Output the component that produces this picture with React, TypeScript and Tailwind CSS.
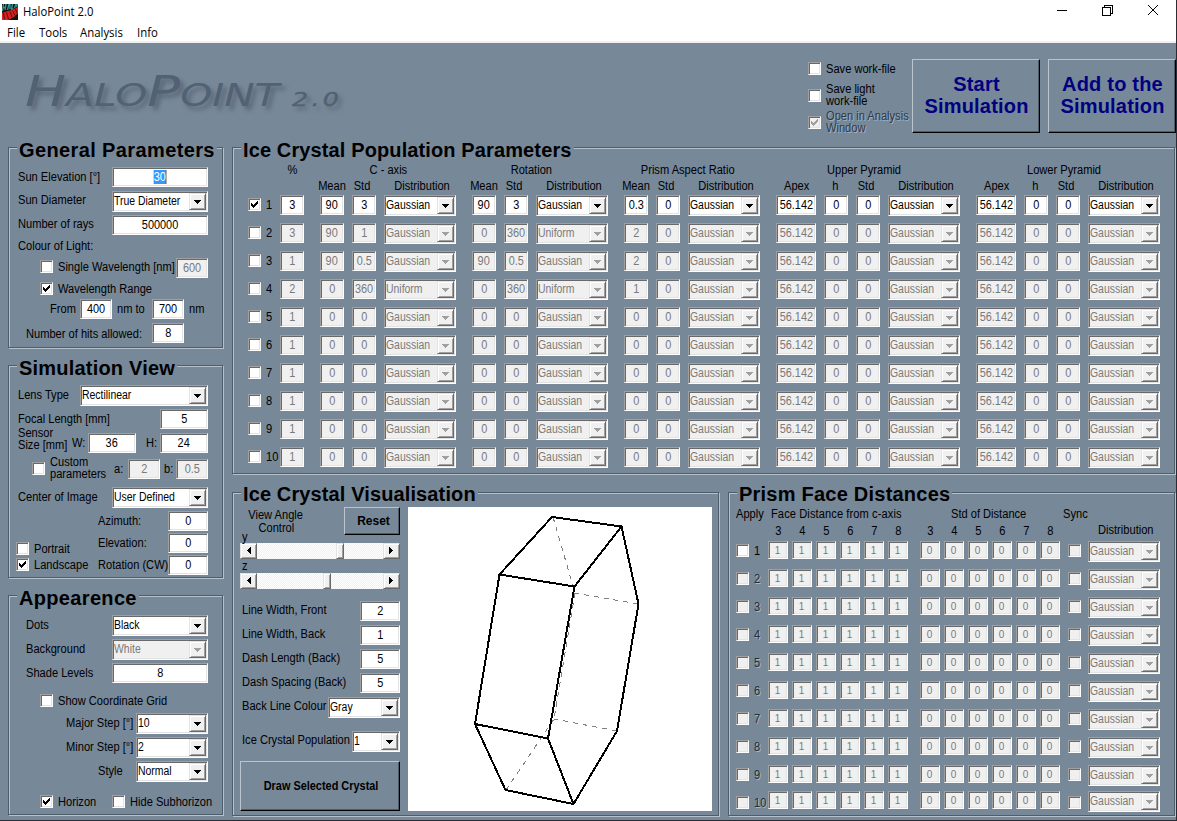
import React from "react";

const SUNKEN =
  "border border-t-[#a0a0a0] border-l-[#a0a0a0] border-r-white border-b-white shadow-[inset_1px_1px_0_#696969,inset_-1px_-1px_0_#e3e3e3]";
const RAISED =
  "border border-t-[#e3e3e3] border-l-[#e3e3e3] border-r-[#696969] border-b-[#696969] shadow-[inset_1px_1px_0_#fff,inset_-1px_-1px_0_#a0a0a0]";

type Kids = { children?: React.ReactNode; className?: string };

function Label({ children, className = "" }: Kids) {
  return (
    <div className={`flex shrink-0 items-center whitespace-nowrap ${className}`}>
      <span className="block origin-left scale-x-[0.925]">{children}</span>
    </div>
  );
}

function Head({ children, className = "" }: Kids) {
  return (
    <div className={`flex shrink-0 items-center justify-center whitespace-nowrap ${className}`}>
      <span className="block scale-x-[0.925]">{children}</span>
    </div>
  );
}

function Field({ v, className = "w-[24px]", off = false }: { v: React.ReactNode; className?: string; off?: boolean }) {
  return (
    <div
      className={`flex h-[20px] shrink-0 items-center justify-center whitespace-nowrap pb-px ${SUNKEN} ${
        off ? "bg-[#f0f0f0] text-[#7a7a7a]" : "bg-white text-black"
      } ${className}`}
    >
      <span className="block scale-x-[0.91]">{v}</span>
    </div>
  );
}

function Select({
  v,
  className = "mt-px w-[72px]",
  off = false,
}: {
  v: string;
  className?: string;
  off?: boolean;
}) {
  return (
    <div
      className={`flex h-[21px] shrink-0 items-center justify-between whitespace-nowrap p-px ${SUNKEN} ${
        off ? "bg-[#f0f0f0] text-[#7a7a7a]" : "bg-white text-black"
      } ${className}`}
    >
      <span className="block w-0 origin-left scale-x-[0.87] pb-px">{v}</span>
      <span className={`flex h-[17px] w-[17px] shrink-0 items-center justify-center bg-[#f0f0f0] ${RAISED}`}>
        <svg width="7" height="4" viewBox="0 0 7 4" className="mt-px" shapeRendering="crispEdges">
          <path d="M0 0h7v1h-1v1h-1v1h-1v1h-1v-1h-1v-1h-1v-1h-1z" fill={off ? "#a0a0a0" : "#000"} />
        </svg>
      </span>
    </div>
  );
}

function Check({ on = false, off = false, className = "" }: { on?: boolean; off?: boolean; className?: string }) {
  return (
    <div
      className={`flex h-[13px] w-[13px] shrink-0 items-center justify-center ${SUNKEN} ${
        off ? "bg-[#f0f0f0]" : "bg-white"
      } ${className}`}
    >
      {on && (
        <svg width="7" height="7" viewBox="0 0 7 7" shapeRendering="crispEdges">
          <path
            d="M0 2h1v1h1v1h1v-1h1v-1h1v-1h1v-1h1v3h-1v1h-1v1h-1v1h-1v1h-1v-1h-1v-1h-1z"
            fill={off ? "#a0a0a0" : "#000"}
          />
        </svg>
      )}
    </div>
  );
}

function Group({ title, children, className = "", heading }: Kids & { title: string; heading: string }) {
  return (
    <section
      className={`shrink-0 border border-[#4f5d6b] shadow-[inset_1px_1px_0_#b7c1cb,1px_1px_0_#b7c1cb] ${className}`}
    >
      <h2
        className={`-mt-[10px] ml-[8px] flex h-[24px] w-fit items-center whitespace-nowrap bg-[#778899] px-[2px] text-[20px] font-bold ${heading}`}
      >
        {title}
      </h2>
      {children}
    </section>
  );
}

function Row({ children, className = "h-[24px]" }: Kids) {
  return <div className={`flex items-center ${className}`}>{children}</div>;
}

function GeneralParameters() {
  return (
    <Group title="General Parameters" heading="tracking-[0.38px]" className="h-[201px] w-[215px]">
      <div className="-ml-px mt-[3px] flex flex-col">
        <Row>
          <Label className="ml-[10px] w-[94px]">Sun Elevation [°]</Label>
          <Field v={<span className="border-r border-[#c06000] bg-[#3399ff] text-white">30</span>} className="w-[96px]" />
        </Row>
        <Row>
          <Label className="ml-[10px] w-[94px] pb-[2px]">Sun Diameter</Label>
          <Select v="True Diameter" className="mt-px w-[96px]" />
        </Row>
        <Row>
          <Label className="ml-[10px] w-[94px] pb-[2px]">Number of rays</Label>
          <Field v="500000" className="w-[96px]" />
        </Row>
        <Row className="h-[18px]">
          <Label className="ml-[10px] pb-px">Colour of Light:</Label>
        </Row>
        <Row className="h-[26px]">
          <Check className="mb-[3px] ml-[32px]" />
          <Label className="ml-[5px] w-[118px] pb-[2px]">Single Wavelength [nm]</Label>
          <Field v="600" className="w-[32px]" off />
        </Row>
        <Row className="h-[17px]">
          <Check on className="mb-[2px] ml-[32px]" />
          <Label className="ml-[5px] pb-px">Wavelength Range</Label>
        </Row>
        <Row className="h-[22px]">
          <Label className="ml-[42px] w-[30px] pb-px">From</Label>
          <Field v="400" className="w-[32px]" />
          <Label className="ml-[5px] w-[35px] pb-px">nm to</Label>
          <Field v="700" className="w-[32px]" />
          <Label className="ml-[5px] pb-px">nm</Label>
        </Row>
        <Row className="h-[26px]">
          <Label className="ml-[18px] w-[126px] pt-[2px]">Number of hits allowed:</Label>
          <Field v="8" className="w-[32px]" />
        </Row>
      </div>
    </Group>
  );
}

function SimulationView() {
  return (
    <Group title="Simulation View" heading="tracking-[0.2px]" className="mt-[17px] h-[213px] w-[215px]">
      <div className="-ml-px mt-[3px] flex flex-col">
        <Row>
          <Label className="ml-[10px] w-[62px]">Lens Type</Label>
          <Select v="Rectilinear" className="mt-px w-[128px]" />
        </Row>
        <Row>
          <Label className="ml-[10px] w-[142px]">Focal Length [mm]</Label>
          <Field v="5" className="w-[48px]" />
        </Row>
        <Row>
          <Label className="ml-[10px] w-[54px] pb-[8px] leading-[12px]">
            Sensor
            <br />
            Size [mm]
          </Label>
          <Label className="w-[16px]">W:</Label>
          <Field v="36" className="w-[48px]" />
          <Label className="ml-[10px] w-[14px]">H:</Label>
          <Field v="24" className="w-[48px]" />
        </Row>
        <Row className="h-[28px]">
          <Check className="mb-px ml-[24px]" />
          <Label className="ml-[5px] w-[64px] pb-[2px] leading-[12px]">
            Custom
            <br />
            parameters
          </Label>
          <Label className="w-[14px]">a:</Label>
          <Field v="2" className="w-[32px]" off />
          <Label className="ml-[4px] w-[12px]">b:</Label>
          <Field v="0.5" className="w-[32px]" off />
        </Row>
        <Row className="h-[28px]">
          <Label className="ml-[10px] w-[94px]">Center of Image</Label>
          <Select v="User Defined" className="mt-px w-[96px]" />
        </Row>
        <div className="-mt-px flex">
          <div className="flex w-[90px] flex-col pt-[30px]">
            <Row className="h-[17px]">
              <Check className="ml-[8px]" />
              <Label className="ml-[5px] pt-px">Portrait</Label>
            </Row>
            <Row className="h-[16px]">
              <Check on className="mb-px ml-[8px]" />
              <Label className="ml-[5px]">Landscape</Label>
            </Row>
          </div>
          <div className="flex flex-col">
            {["Azimuth:", "Elevation:", "Rotation (CW)"].map((t) => (
              <Row key={t} className="h-[22px]">
                <Label className="w-[70px] pb-px">{t}</Label>
                <Field v="0" className="w-[40px]" />
              </Row>
            ))}
          </div>
        </div>
      </div>
    </Group>
  );
}

function Appearance() {
  const steps: [string, string, string][] = [
    ["Major Step [°]", "10", "ml-[58px] w-[70px]"],
    ["Minor Step [°]", "2", "ml-[58px] w-[70px]"],
    ["Style", "Normal", "ml-[90px] w-[38px]"],
  ];
  return (
    <Group title="Appearence" heading="tracking-[0.33px]" className="mt-[17px] h-[220px] w-[215px]">
      <div className="-ml-px mt-[3px] flex flex-col">
        <Row>
          <Label className="ml-[18px] w-[86px]">Dots</Label>
          <Select v="Black" className="mt-px w-[96px]" />
        </Row>
        <Row>
          <Label className="ml-[18px] w-[86px]">Background</Label>
          <Select v="White" className="mt-px w-[96px]" off />
        </Row>
        <Row>
          <Label className="ml-[18px] w-[86px]">Shade Levels</Label>
          <Field v="8" className="w-[96px]" />
        </Row>
        <Row className="h-[30px]">
          <Check className="mt-px ml-[32px]" />
          <Label className="ml-[5px] pt-px">Show Coordinate Grid</Label>
        </Row>
        <div className="-mt-[4px] flex flex-col">
          {steps.map(([t, v, c]) => (
            <Row key={t}>
              <Label className={c}>{t}</Label>
              <Select v={v} />
            </Row>
          ))}
        </div>
        <Row className="mt-[5px] h-[26px]">
          <Check on className="mt-px ml-[32px]" />
          <Label className="ml-[5px] w-[54px] pt-px">Horizon</Label>
          <Check className="mt-px" />
          <Label className="ml-[5px] pt-px">Hide Subhorizon</Label>
        </Row>
      </div>
    </Group>
  );
}

const G = "Gaussian";
const U = "Uniform";
const POP: [string, string, string, string, string, string, string, string][] = [
  ["3", "90", "3", G, "90", "3", G, "0.3"],
  ["3", "90", "1", G, "0", "360", U, "2"],
  ["1", "90", "0.5", G, "90", "0.5", G, "2"],
  ["2", "0", "360", U, "0", "360", U, "1"],
  ["1", "0", "0", G, "0", "0", G, "0"],
  ["1", "0", "0", G, "0", "0", G, "0"],
  ["1", "0", "0", G, "0", "0", G, "0"],
  ["1", "0", "0", G, "0", "0", G, "0"],
  ["1", "0", "0", G, "0", "0", G, "0"],
  ["1", "0", "0", G, "0", "0", G, "0"],
];

function MeanHeads() {
  return (
    <>
      <Head className="w-[24px]">Mean</Head>
      <Head className="w-[24px] pr-[4px]">Std</Head>
      <Head className="w-[72px] pl-[5px]">Distribution</Head>
    </>
  );
}

function PyramidHeads() {
  return (
    <>
      <Head className="w-[40px] pl-px">Apex</Head>
      <Head className="w-[24px] pr-[2px]">h</Head>
      <Head className="w-[24px] pr-[4px]">Std</Head>
      <Head className="w-[72px] pl-[5px]">Distribution</Head>
    </>
  );
}

function Population() {
  return (
    <Group title="Ice Crystal Population Parameters" heading="tracking-[0.12px]" className="h-[327px] w-[943px]">
      <div className="-ml-px flex flex-col">
        <Row className="h-[16px]">
          <Head className="ml-[48px] w-[24px]">%</Head>
          <Head className="ml-[16px] w-[136px]">C - axis</Head>
          <Head className="ml-[16px] w-[136px] pr-[17px]">Rotation</Head>
          <Head className="ml-[16px] w-[136px] pr-[9px]">Prism Aspect Ratio</Head>
          <Head className="ml-[16px] w-[184px] pr-[8px]">Upper Pyramid</Head>
          <Head className="ml-[16px] w-[184px] pr-[8px]">Lower Pyramid</Head>
        </Row>
        <Row className="h-[16px]">
          <div className="ml-[88px] flex gap-[8px]">
            <MeanHeads />
          </div>
          <div className="ml-[16px] flex gap-[8px]">
            <MeanHeads />
          </div>
          <div className="ml-[16px] flex gap-[8px]">
            <MeanHeads />
          </div>
          <div className="ml-[16px] flex gap-[8px]">
            <PyramidHeads />
          </div>
          <div className="ml-[16px] flex gap-[8px]">
            <PyramidHeads />
          </div>
        </Row>
        <div className="-mt-[3px] flex flex-col">
          {POP.map((r, i) => {
            const off = i > 0;
            return (
              <Row key={i} className="h-[28px]">
                <Check on={!off} className="mb-px ml-[16px]" />
                <Label className="ml-[5px] w-[14px]">{i + 1}</Label>
                <Field v={r[0]} off={off} />
                <div className="ml-[16px] flex items-center gap-[8px]">
                  <Field v={r[1]} off={off} />
                  <Field v={r[2]} off={off} />
                  <Select v={r[3]} off={off} />
                </div>
                <div className="ml-[16px] flex items-center gap-[8px]">
                  <Field v={r[4]} off={off} />
                  <Field v={r[5]} off={off} />
                  <Select v={r[6]} off={off} />
                </div>
                <div className="ml-[16px] flex items-center gap-[8px]">
                  <Field v={r[7]} off={off} />
                  <Field v="0" off={off} />
                  <Select v={G} off={off} />
                </div>
                {[0, 1].map((k) => (
                  <div key={k} className="ml-[16px] flex items-center gap-[8px]">
                    <Field v="56.142" off={off} className="w-[40px]" />
                    <Field v="0" off={off} />
                    <Field v="0" off={off} />
                    <Select v={G} off={off} />
                  </div>
                ))}
              </Row>
            );
          })}
        </div>
      </div>
    </Group>
  );
}

const DITHER =
  "bg-[repeating-conic-gradient(#ffffff_0_25%,#f0f0f0_0_50%)] bg-[length:2px_2px]";

function ScrollBar({ lead }: { lead: string }) {
  return (
    <div className={`flex h-[16px] w-[160px] shrink-0 ${DITHER}`}>
      <span className={`flex w-[17px] items-center justify-center bg-[#f0f0f0] pb-px ${RAISED}`}>
        <svg width="4" height="7" viewBox="0 0 4 7" shapeRendering="crispEdges">
          <path d="M4 0v7h-1v-1h-1v-1h-1v-1h-1v-1h1v-1h1v-1h1v-1z" />
        </svg>
      </span>
      <span className={lead} />
      <span className={`w-[8px] bg-[#f0f0f0] ${RAISED}`} />
      <span className="grow" />
      <span className={`flex w-[17px] items-center justify-center bg-[#f0f0f0] pr-px pb-px ${RAISED}`}>
        <svg width="4" height="7" viewBox="0 0 4 7" shapeRendering="crispEdges">
          <path d="M0 0v7h1v-1h1v-1h1v-1h1v-1h-1v-1h-1v-1h-1v-1z" />
        </svg>
      </span>
    </div>
  );
}

const BUTTON =
  "flex shrink-0 items-center justify-center border border-t-[#bcc5ce] border-l-[#bcc5ce] border-r-black border-b-black bg-[#778899] text-center font-bold shadow-[inset_-1px_-1px_0_#4f5b67]";

function Crystal() {
  return (
    <svg width="304" height="304" viewBox="408 507 304 304" className="bg-white" fill="none">
      <g stroke="#808080" strokeWidth="1" strokeDasharray="5 5" shapeRendering="crispEdges">
        <path d="M553 517L575 593M638 604L575 593M575 593L554 719M617 731L554 719M506 790L554 719" />
      </g>
      <g stroke="#000" strokeWidth="2" strokeLinejoin="round" shapeRendering="crispEdges">
        <path d="M552 517L621.500 526.500L574.500 586.500L499.500 574.500Z" />
        <path d="M499.500 574.500L475 724L548 738.500L574.500 586.500" />
        <path d="M621.500 526.500L638.500 604L617 731L573.500 804L548 738.500" />
        <path d="M475 724L505.500 790L573.500 804" />
      </g>
    </svg>
  );
}

function Visualisation() {
  const widths: [string, string][] = [
    ["Line Width, Front", "2"],
    ["Line Width, Back", "1"],
    ["Dash Length (Back)", "5"],
    ["Dash Spacing (Back)", "5"],
  ];
  return (
    <Group
      title="Ice Crystal Visualisation"
      heading="pb-[2px] tracking-[0.12px]"
      className="h-[324px] w-[487px]"
    >
      <div className="flex pl-[7px]">
        <div className="flex w-[160px] flex-col">
          <div className="flex h-[28px]">
            <div className="flex w-[104px] flex-col items-center pt-[2px] pr-[32px] leading-[13px]">
              <Head className="h-[13px]">View Angle</Head>
              <Head className="h-[13px]">Control</Head>
            </div>
            <button className={`h-[28px] w-[56px] pl-[3px] ${BUTTON}`}>Reset</button>
          </div>
          <Label className="-mt-[2px] ml-[2px] h-[10px] pb-[2px]">y</Label>
          <ScrollBar lead="w-[79px]" />
          <Label className="ml-[2px] h-[14px]">z</Label>
          <ScrollBar lead="w-[66px]" />
          <div className="mt-[10px] flex flex-col">
            {widths.map(([t, v]) => (
              <Row key={t}>
                <Label className="ml-[2px] w-[118px] pb-[2px]">{t}</Label>
                <Field v={v} className="w-[40px]" />
              </Row>
            ))}
            <Row>
              <Label className="ml-[2px] w-[86px] pb-[2px]">Back Line Colour</Label>
              <Select v="Gray" />
            </Row>
          </div>
          <Row className="mt-[10px] h-[24px]">
            <Label className="ml-[2px] w-[110px] pb-[2px]">Ice Crystal Population</Label>
            <Select v="1" className="mt-px w-[48px]" />
          </Row>
          <button className={`mt-[8px] h-[50px] w-[160px] pl-[2px] ${BUTTON}`}>
            <span className="block whitespace-nowrap scale-x-[0.91]">Draw Selected Crystal</span>
          </button>
        </div>
        <div className="ml-[8px]">
          <Crystal />
        </div>
      </div>
    </Group>
  );
}

const FACES = ["3", "4", "5", "6", "7", "8"];
const FACE_ROWS = Array.from({ length: 10 }, (_, i) => i + 1);

function FaceFields({ v }: { v: string }) {
  return (
    <div className="flex gap-[4px]">
      {FACES.map((f) => (
        <div
          key={f}
          className={`flex h-[18px] w-[20px] items-center justify-center bg-[#f0f0f0] pt-px pr-px text-[10px] text-[#7a7a7a] ${SUNKEN}`}
        >
          {v}
        </div>
      ))}
    </div>
  );
}

function FaceHeads({ className = "" }: { className?: string }) {
  return (
    <div className={`flex gap-[4px] pb-[2px] ${className}`}>
      {FACES.map((f) => (
        <Head key={f} className="w-[20px] pl-px">
          {f}
        </Head>
      ))}
    </div>
  );
}

function PrismFaces() {
  return (
    <Group title="Prism Face Distances" heading="pb-[2px] tracking-[0.23px]" className="h-[324px] w-[447px]">
      <div className="-ml-px flex flex-col">
        <Row className="h-[16px]">
          <Label className="ml-[8px] w-[35px] pb-[2px]">Apply</Label>
          <Label className="w-[180px] pb-[2px] tracking-[0.1px]">Face Distance from c-axis</Label>
          <Label className="w-[112px] pb-[2px]">Std of Distance</Label>
          <Label className="pb-[2px]">Sync</Label>
        </Row>
        <Row className="h-[18px]">
          <FaceHeads className="ml-[40px]" />
          <FaceHeads className="ml-[12px]" />
          <Label className="ml-[38px] pb-[4px]">Distribution</Label>
        </Row>
        <div className="-mt-[5px] flex flex-col">
          {FACE_ROWS.map((n) => {
            const last = n === 10;
            return (
              <Row key={n} className={last ? "h-[24px]" : "h-[28px]"}>
                <Check className={last ? "mt-[5px] ml-[8px]" : "mt-px ml-[8px]"} off={n > 1} />
                <Label
                  className={`ml-[5px] w-[14px] ${last ? "pt-[5px]" : "pt-px"} ${
                    n > 1 ? "text-[#252d35] [text-shadow:1px_1px_0_#a9b6c4]" : ""
                  }`}
                >
                  {n}
                </Label>
                <FaceFields v="1" />
                <div className="ml-[12px]">
                  <FaceFields v="0" />
                </div>
                <Check className={last ? "mt-[5px] ml-[8px]" : "mt-px ml-[8px]"} off />
                <Select v={G} off className="mt-[3px] ml-[7px] w-[72px]" />
              </Row>
            );
          })}
        </div>
      </div>
    </Group>
  );
}

function AppIcon() {
  return (
    <svg width="16" height="16" viewBox="0 0 16 16" className="mt-px ml-[2px]">
      <rect width="16" height="16" fill="#141414" />
      <path
        d="M1.500 0L.5 7M4 0L3 6M1 3.500h2.500M7 0L5.500 6M8 0v5M10.500 0L9.500 5h2M14 0l-1.500 4M15.500 0L14.500 3"
        stroke="#2f9a9a"
        strokeWidth="1.300"
        fill="none"
      />
      <path d="M0 9l4-1.500L10 6l6-3v6l-4 4-6 3H0z" fill="#dc1e1e" />
      <path d="M1.500 9l1 6M4.500 8.500l2 6.500M8 7.500l2 5.500M10.500 6.500l2.500 5M13.500 5l1.500 4" stroke="#5a0c0c" strokeWidth="1" />
    </svg>
  );
}

function TitleBar() {
  return (
    <header className="flex h-[43px] flex-col border-b-2 border-[#f0f0f0] bg-white font-['Open_Sans',sans-serif] text-[12px]">
      <div className="flex h-[22px] items-center">
        <AppIcon />
        <span className="ml-[5px] mt-[2px] block w-[1033px] origin-left scale-x-[0.94] whitespace-nowrap">
          HaloPoint 2.0
        </span>
        <svg width="104" height="14" viewBox="0 0 104 14" fill="none" stroke="#000" shapeRendering="crispEdges">
          <path d="M1 6.500h10M46.500 3.500h8v8h-8zM48.500 3.500v-2h8v8h-2" />
          <path d="M92 1l10 10M102 1l-10 10" shapeRendering="auto" />
        </svg>
      </div>
      <nav className="flex h-[19px] items-center gap-[14px] pt-[3px] pl-[7px]">
        {[
          ["File", "w-[18px]"],
          ["Tools", "w-[27px]"],
          ["Analysis", "w-[43px]"],
          ["Info", "w-[22px]"],
        ].map(([t, w]) => (
          <span key={t} className={`block ${w}`}>
            <span className="block origin-left scale-x-[0.95] whitespace-nowrap">{t}</span>
          </span>
        ))}
      </nav>
    </header>
  );
}

function Logo() {
  return (
    <div className="flex w-[800px] items-baseline pt-[23px] pl-[25px]">
      <div className="flex origin-left scale-x-[1.27] items-baseline whitespace-nowrap font-['DejaVu_Sans',sans-serif] text-[32px] leading-[50px] text-[#526173] italic [text-shadow:3px_4px_4px_#5b6876]">
        <span className="text-[43px]">H</span>
        <span>ALO</span>
        <span className="text-[43px]">P</span>
        <span>OINT</span>
        <span className="ml-[10px] text-[20px] tracking-[2.500px] [-webkit-text-stroke:0.4px_#526173]">2.0</span>
      </div>
    </div>
  );
}

export default function App() {
  return (
    <div className="flex h-[821px] w-[1177px] flex-col overflow-hidden border-r border-b border-[#2c2c34] bg-[#778899] font-['Liberation_Sans',Arial,sans-serif] text-[12px] leading-[14px] text-black">
      <TitleBar />
      <div className="flex h-[104px] shrink-0">
        <Logo />
        <div className="flex w-[112px] flex-col pt-[17px] pl-[8px]">
          <Row className="h-[18px]">
            <Check className="mb-px" />
            <Label className="ml-[5px]">Save work-file</Label>
          </Row>
          <Row className="mt-[6px] h-[24px]">
            <Check className="mb-px" />
            <Label className="ml-[5px] pb-[2px] leading-[12px]">
              Save light
              <br />
              work-file
            </Label>
          </Row>
          <Row className="mt-[2px] h-[24px]">
            <Check on off className="mt-px" />
            <Label className="ml-[5px] leading-[12px] text-[#303a45] [text-shadow:1px_1px_0_#a3b0bd]">
              Open in Analysis
              <br />
              Window
            </Label>
          </Row>
        </div>
        <button
          className={`mt-[16px] h-[74px] w-[128px] pb-[2px] pl-px text-[20px] leading-[22px] tracking-[0.2px] text-[#000080] ${BUTTON}`}
        >
          Start
          <br />
          Simulation
        </button>
        <button
          className={`mt-[16px] ml-[8px] h-[74px] w-[128px] pb-[2px] pl-px text-[20px] leading-[22px] tracking-[0.2px] text-[#000080] ${BUTTON}`}
        >
          Add to the
          <br />
          Simulation
        </button>
      </div>
      <div className="flex">
        <div className="flex w-[224px] flex-col pl-[8px]">
          <GeneralParameters />
          <SimulationView />
          <Appearance />
        </div>
        <div className="flex flex-col pl-[8px]">
          <Population />
          <div className="mt-[18px] flex gap-[9px]">
            <Visualisation />
            <PrismFaces />
          </div>
        </div>
      </div>
    </div>
  );
}
